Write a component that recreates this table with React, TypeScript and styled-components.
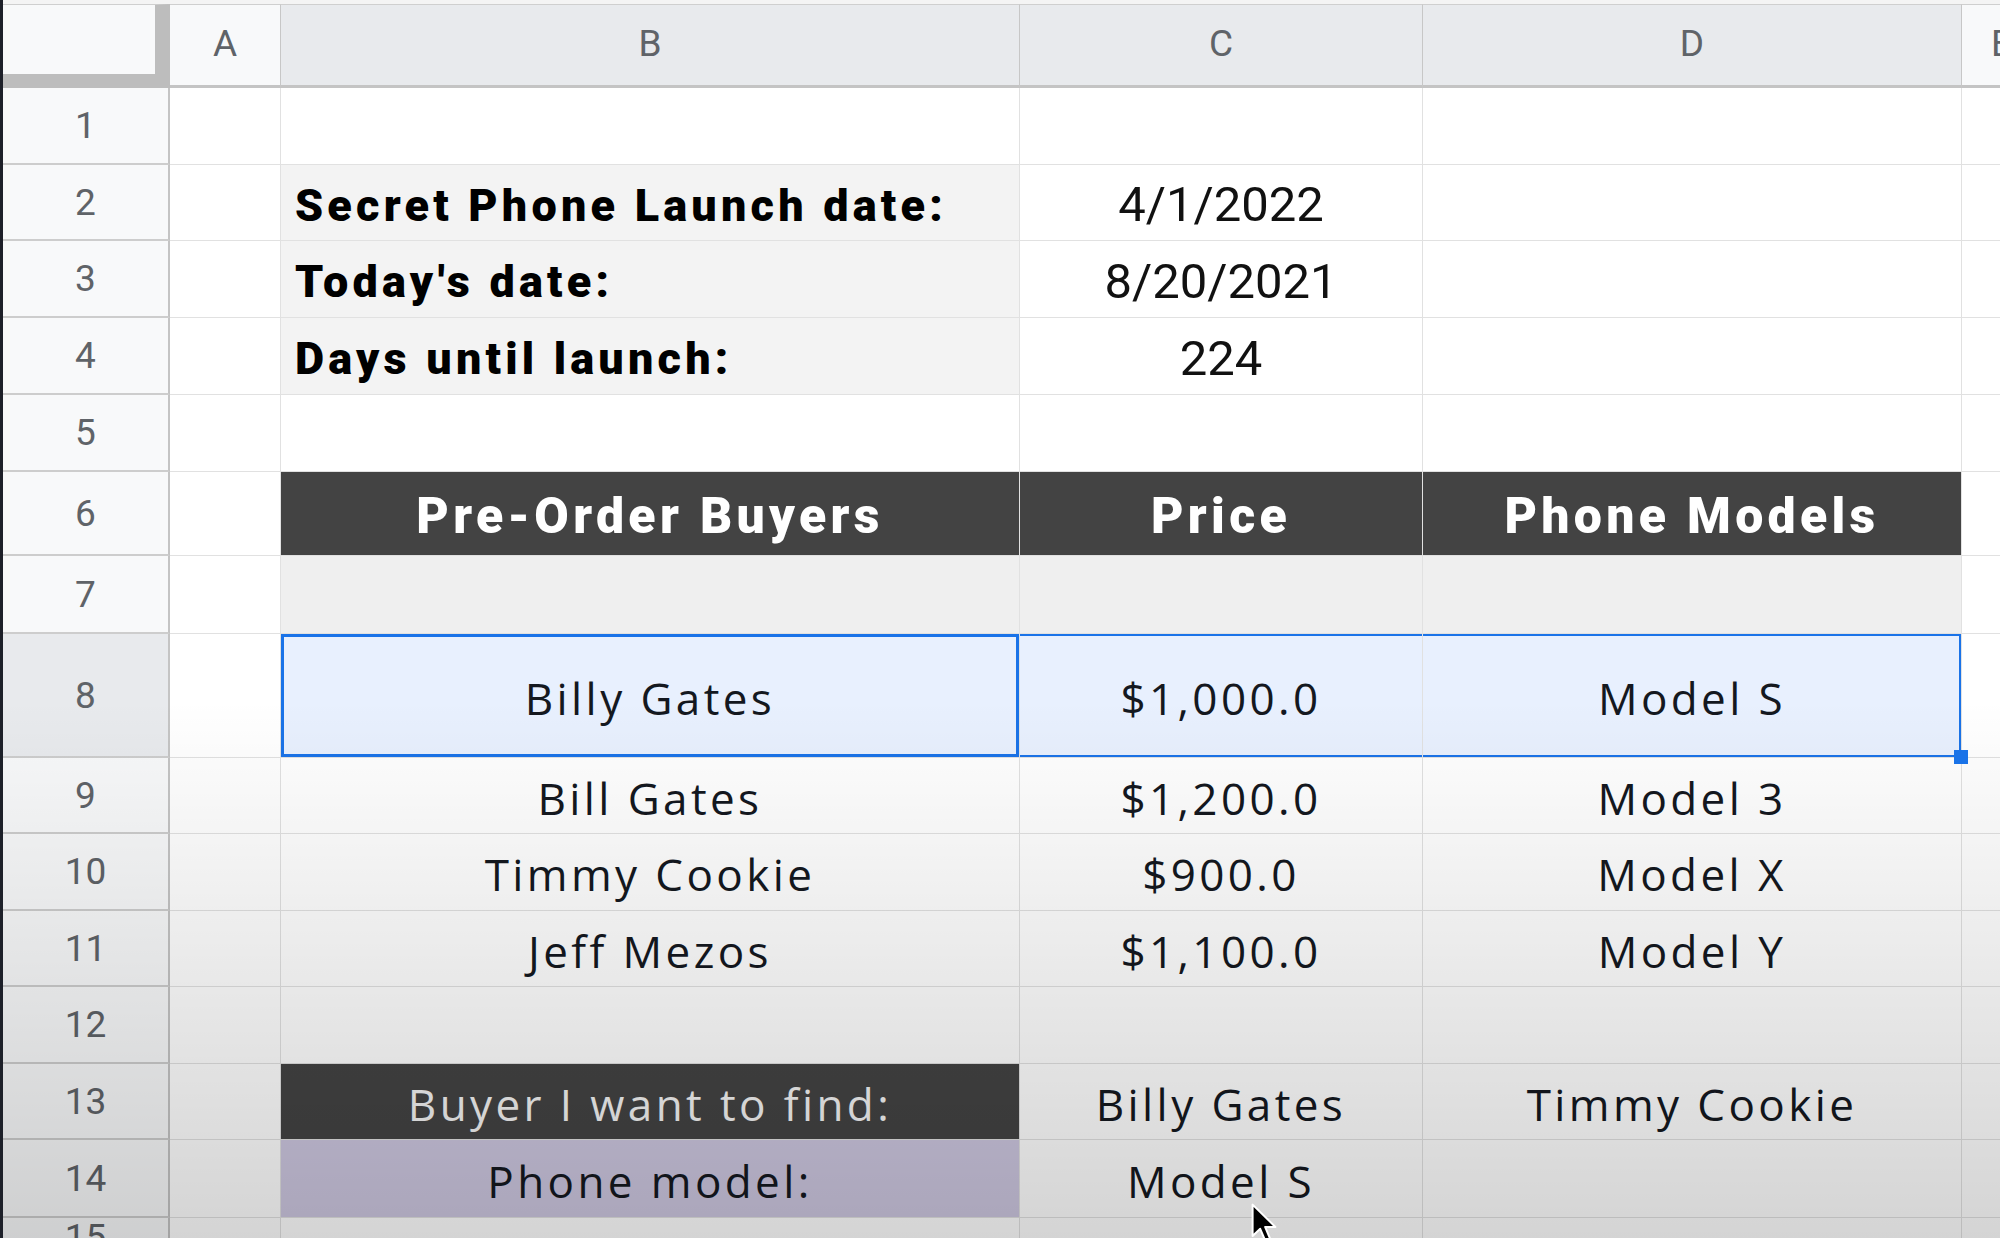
import React from 'react';
import styled, { createGlobalStyle, css } from 'styled-components';

const GlobalStyle = createGlobalStyle`
  html, body {
    margin: 0;
    padding: 0;
    background: #ffffff;
  }
  * {
    box-sizing: border-box;
  }
`;

type Kind = 'label' | 'date' | 'head' | 'text' | 'inverse';

interface CellSpec {
  text?: string;
  kind?: Kind;
  bg?: string;
  align?: 'left' | 'center';
}

const BLUE = '#1a73e8';
const DARK = '#434343';
const LABEL_BG = '#f3f3f3';
const BAND_BG = '#efefef';
const PURPLE = '#cdc7e0';

const COLUMN_LETTERS = ['A', 'B', 'C', 'D', 'E'];
const SELECTED_COLUMNS = ['B', 'C', 'D'];
const ROW_HEIGHTS = [77, 76, 77, 77, 77, 84, 78, 124, 76, 77, 76, 77, 76, 78, 40];
const SELECTED_ROW = 8;

const label = (text: string): CellSpec => ({ text, kind: 'label', bg: LABEL_BG, align: 'left' });
const date = (text: string): CellSpec => ({ text, kind: 'date' });
const head = (text: string): CellSpec => ({ text, kind: 'head', bg: DARK });
const plain = (text?: string): CellSpec => ({ text, kind: 'text' });

// columns B, C, D for rows 1..15 (A and E stay empty)
const ROWS: CellSpec[][] = [
  [{}, {}, {}],
  [label('Secret Phone Launch date:'), date('4/1/2022'), {}],
  [label("Today's date:"), date('8/20/2021'), {}],
  [label('Days until launch:'), date('224'), {}],
  [{}, {}, {}],
  [head('Pre-Order Buyers'), head('Price'), head('Phone Models')],
  [{ bg: BAND_BG }, { bg: BAND_BG }, { bg: BAND_BG }],
  [plain('Billy Gates'), plain('$1,000.0'), plain('Model S')],
  [plain('Bill Gates'), plain('$1,200.0'), plain('Model 3')],
  [plain('Timmy Cookie'), plain('$900.0'), plain('Model X')],
  [plain('Jeff Mezos'), plain('$1,100.0'), plain('Model Y')],
  [{}, {}, {}],
  [{ text: 'Buyer I want to find:', kind: 'inverse', bg: DARK }, plain('Billy Gates'), plain('Timmy Cookie')],
  [{ text: 'Phone model:', kind: 'text', bg: PURPLE }, plain('Model S'), {}],
  [{}, {}, {}],
];

const kindStyles: Record<Kind, ReturnType<typeof css>> = {
  label: css`
    font-family: Roboto, 'Liberation Sans', sans-serif;
    font-weight: 900;
    font-size: 45px;
    letter-spacing: 4.2px;
    color: #000;
  `,
  date: css`
    font-family: Roboto, 'Liberation Sans', sans-serif;
    font-weight: 400;
    font-size: 49px;
    color: #111;
  `,
  head: css`
    font-family: Roboto, 'Liberation Sans', sans-serif;
    font-weight: 900;
    font-size: 50px;
    letter-spacing: 4.3px;
    color: #fff;
  `,
  text: css`
    font-family: 'Open Sans', 'DejaVu Sans', sans-serif;
    font-weight: 400;
    font-size: 44px;
    letter-spacing: 3.4px;
    color: #14181f;
  `,
  inverse: css`
    font-family: 'Open Sans', 'DejaVu Sans', sans-serif;
    font-weight: 400;
    font-size: 44px;
    letter-spacing: 3.4px;
    color: #f4f4f4;
  `,
};

const Page = styled.div`
  position: relative;
  width: 2000px;
  height: 1238px;
  overflow: hidden;
  background: #f4f4f4;
  border-left: 3px solid #1d2029;
  padding-top: 4px;
`;

const Sheet = styled.div`
  display: grid;
  grid-template-columns: 167px 111px 739px 403px 539px 80px;
  grid-template-rows: 84px ${ROW_HEIGHTS.map((h) => `${h}px`).join(' ')};
  background: #fff;
`;

const Corner = styled.div`
  background: #f8f9fa;
  border-top: 1px solid #cfcfcf;
  border-right: 15px solid #bdbdbd;
  border-bottom: 14px solid #bdbdbd;
`;

const ColumnHeader = styled.div<{ $selected: boolean }>`
  display: flex;
  align-items: center;
  justify-content: center;
  padding-bottom: 4px;
  background: ${(p) => (p.$selected ? '#e8eaed' : '#f8f9fa')};
  border-top: 1px solid #cfcfcf;
  border-right: 1px solid #c7c7c7;
  border-bottom: 3px solid #c4c4c4;
  font-family: Roboto, 'Liberation Sans', sans-serif;
  font-size: 37px;
  color: #5f6368;
`;

const RowHeader = styled.div<{ $selected: boolean }>`
  display: flex;
  align-items: center;
  justify-content: center;
  background: ${(p) => (p.$selected ? '#e8eaed' : '#f8f9fa')};
  border-right: 2px solid #c4c4c4;
  border-bottom: 2px solid #cdcdcd;
  font-family: Roboto, 'Liberation Sans', sans-serif;
  font-size: 37px;
  color: #5f6368;
`;

const Cell = styled.div<{
  $kind?: Kind;
  $bg?: string;
  $align?: 'left' | 'center';
  $active?: boolean;
  $range?: boolean;
  $rangeEnd?: boolean;
}>`
  position: relative;
  display: flex;
  align-items: center;
  justify-content: ${(p) => (p.$align === 'left' ? 'flex-start' : 'center')};
  padding: ${(p) => (p.$align === 'left' ? '5px 0 0 14px' : '4px 0 0')};
  white-space: nowrap;
  background: ${(p) => p.$bg ?? '#fff'};
  border-right: 1px solid #e1e1e1;
  border-bottom: 1px solid #e1e1e1;
  ${(p) => p.$kind && kindStyles[p.$kind]}

  ${(p) =>
    p.$range &&
    css`
      background: #e8f0fe;
      box-shadow: inset 0 2px 0 ${BLUE}, inset 0 -2px 0 ${BLUE}
        ${p.$rangeEnd ? `, inset -2px 0 0 ${BLUE}` : ''};
    `}

  ${(p) =>
    p.$active &&
    css`
      background: #e8f0fe;
      box-shadow: inset 0 0 0 3px ${BLUE};
    `}
`;

const FillHandle = styled.span`
  position: absolute;
  right: -7px;
  bottom: -7px;
  width: 14px;
  height: 14px;
  background: ${BLUE};
  z-index: 2;
`;

const Vignette = styled.div`
  position: absolute;
  inset: 0;
  pointer-events: none;
  background: linear-gradient(
    to bottom,
    rgba(0, 0, 0, 0) 0px,
    rgba(0, 0, 0, 0) 700px,
    rgba(0, 0, 0, 0.17) 1238px
  );
`;

const Pointer = styled.svg`
  position: absolute;
  left: 1248px;
  top: 1203px;
  width: 26px;
  height: 40px;
  z-index: 3;
`;

const App = () => {
  return (
    <>
      <GlobalStyle />
      <Page>
        <Sheet>
          <Corner />
          {COLUMN_LETTERS.map((letter) => (
            <ColumnHeader key={letter} $selected={SELECTED_COLUMNS.includes(letter)}>
              {letter}
            </ColumnHeader>
          ))}

          {ROWS.map((cells, i) => {
            const rowNumber = i + 1;
            const isSelected = rowNumber === SELECTED_ROW;
            return (
              <React.Fragment key={rowNumber}>
                <RowHeader $selected={isSelected}>{rowNumber}</RowHeader>
                <Cell />
                {cells.map((cell, c) => (
                  <Cell
                    key={c}
                    $kind={cell.kind}
                    $bg={cell.bg}
                    $align={cell.align}
                    $active={isSelected && c === 0}
                    $range={isSelected && c > 0}
                    $rangeEnd={isSelected && c === 2}
                  >
                    {cell.text}
                    {isSelected && c === 2 && <FillHandle />}
                  </Cell>
                ))}
                <Cell />
              </React.Fragment>
            );
          })}
        </Sheet>
        <Vignette />
        <Pointer viewBox="0 0 13 20">
          <path
            d="M0.8 0.8 L0.8 16.5 L4.6 12.9 L7.2 19 L9.6 18 L7.1 12 L12.2 12 Z"
            fill="#000"
            stroke="#fff"
            strokeWidth="1"
            strokeLinejoin="round"
          />
        </Pointer>
      </Page>
    </>
  );
};

export default App;
